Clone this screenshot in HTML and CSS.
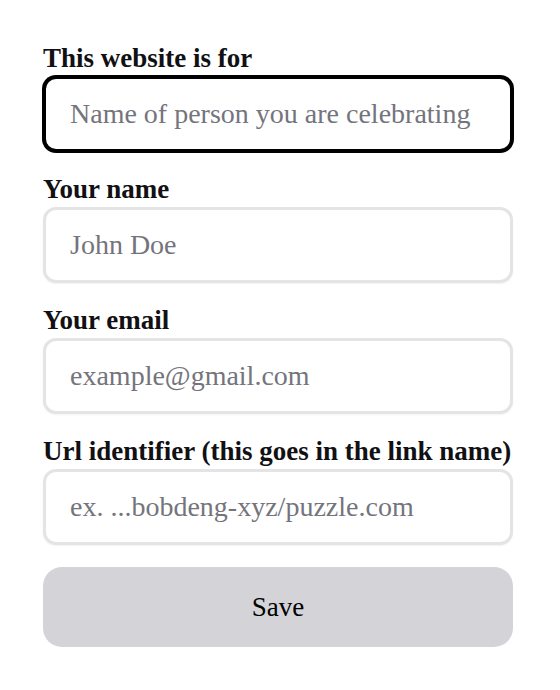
FILE: index.html
```html
<!DOCTYPE html>
<html lang="en">
<head>
<meta charset="utf-8">
<title>Website form</title>
<link rel="stylesheet" href="styles.css">
</head>
<body>
<form class="form">
  <div class="field">
    <label class="label" for="f1">This website is for</label>
    <input class="input input-focus" id="f1" type="text" placeholder="Name of person you are celebrating">
  </div>
  <div class="field">
    <label class="label" for="f2">Your name</label>
    <input class="input" id="f2" type="text" placeholder="John Doe">
  </div>
  <div class="field">
    <label class="label" for="f3">Your email</label>
    <input class="input" id="f3" type="text" placeholder="example@gmail.com">
  </div>
  <div class="field">
    <label class="label" for="f4">Url identifier (this goes in the link name)</label>
    <input class="input" id="f4" type="text" placeholder="ex. ...bobdeng-xyz/puzzle.com">
  </div>
  <button class="save" type="button">Save</button>
</form>
</body>
</html>
```
FILE: styles.css
```css
html, body {
  margin: 0;
  padding: 0;
  background: #ffffff;
}
body {
  font-family: "Liberation Serif", "Times New Roman", serif;
  color: #18181b;
}
.form {
  width: 470px;
  padding: 43px 0 0 43px;
  display: flex;
  flex-direction: column;
  gap: 22px;
}
.field {
  display: flex;
  flex-direction: column;
  gap: 3px;
}
.label {
  font-size: 27px;
  line-height: 30px;
  font-weight: bold;
  white-space: nowrap;
  color: #111114;
}
.input {
  box-sizing: border-box;
  width: 470px;
  height: 76px;
  margin: 0;
  border: 3px solid #e4e4e7;
  border-radius: 13px;
  padding: 0 24px;
  font-family: "Liberation Serif", "Times New Roman", serif;
  font-size: 28px;
  color: #18181b;
  background: #ffffff;
  box-shadow: 0 1px 2px rgba(0, 0, 0, 0.05);
  outline: none;
}
.input::placeholder {
  color: #74747c;
  opacity: 1;
}
.input-focus {
  border-color: #000000;
  box-shadow: 0 0 0 1px #000000;
}
.save {
  box-sizing: border-box;
  width: 470px;
  height: 80px;
  border: none;
  border-radius: 19px;
  background: #d4d4d8;
  font-family: "Liberation Serif", "Times New Roman", serif;
  font-size: 27px;
  color: #000000;
  padding: 0;
}
```
